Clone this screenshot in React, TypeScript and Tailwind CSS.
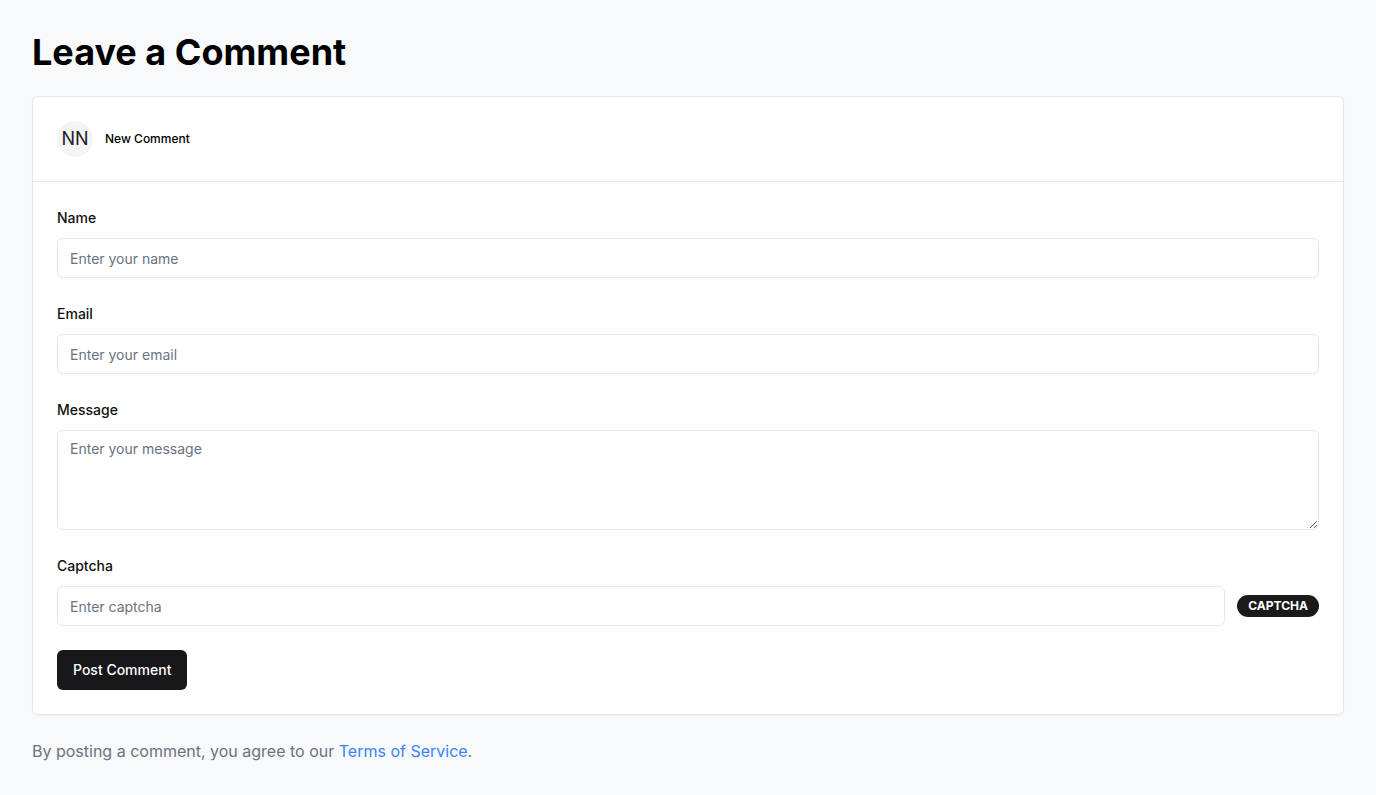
import React from "react";

export default function App() {
  return (
    <div
      className="min-h-screen bg-[#f8f9fa] p-8"
      style={{ fontFamily: "Inter, 'Noto Sans', sans-serif" }}
    >
      <h1 className="mb-6 text-4xl font-bold leading-10 text-black">Leave a Comment</h1>
      <div className="rounded-md border border-[#e5e7eb] bg-white shadow-[0_1px_2px_rgba(0,0,0,0.04)]">
        <div className="flex items-center gap-3 border-b border-[#e5e7eb] p-6">
          <div className="flex h-9 w-9 items-center justify-center rounded-full bg-[#f3f4f6] text-lg text-[#222]">
            NN
          </div>
          <span className="text-xs font-medium text-black">New Comment</span>
        </div>
        <form className="flex flex-col gap-6 p-6" onSubmit={(e) => e.preventDefault()}>
          <div className="flex flex-col">
            <label className="mb-2 text-sm font-medium leading-6 text-[#111]">Name</label>
            <input
              className="h-10 rounded-md border border-[#e5e7eb] px-3 text-sm text-[#111] outline-none placeholder:text-[#6b7280]"
              placeholder="Enter your name"
            />
          </div>
          <div className="flex flex-col">
            <label className="mb-2 text-sm font-medium leading-6 text-[#111]">Email</label>
            <input
              className="h-10 rounded-md border border-[#e5e7eb] px-3 text-sm text-[#111] outline-none placeholder:text-[#6b7280]"
              placeholder="Enter your email"
            />
          </div>
          <div className="flex flex-col">
            <label className="mb-2 text-sm font-medium leading-6 text-[#111]">Message</label>
            <textarea
              className="block h-[100px] rounded-md border border-[#e5e7eb] px-3 py-2 text-sm leading-5 text-[#111] outline-none placeholder:text-[#6b7280]"
              placeholder="Enter your message"
            />
          </div>
          <div className="flex flex-col">
            <label className="mb-2 text-sm font-medium leading-6 text-[#111]">Captcha</label>
            <div className="flex items-center gap-3">
              <input
                className="h-10 flex-1 rounded-md border border-[#e5e7eb] px-3 text-sm text-[#111] outline-none placeholder:text-[#6b7280]"
                placeholder="Enter captcha"
              />
              <span className="rounded-full bg-[#1a1a1a] px-[11px] py-[3px] text-xs font-bold leading-4 text-white">
                CAPTCHA
              </span>
            </div>
          </div>
          <div>
            <button
              type="submit"
              className="h-10 rounded-md bg-[#18181a] px-4 text-sm font-medium text-white"
            >
              Post Comment
            </button>
          </div>
        </form>
      </div>
      <p className="mt-6 text-base leading-6 text-[#6b7280]">
        By posting a comment, you agree to our{" "}
        <a href="#" className="text-[#3b82f6]">
          Terms of Service
        </a>
        .
      </p>
    </div>
  );
}
